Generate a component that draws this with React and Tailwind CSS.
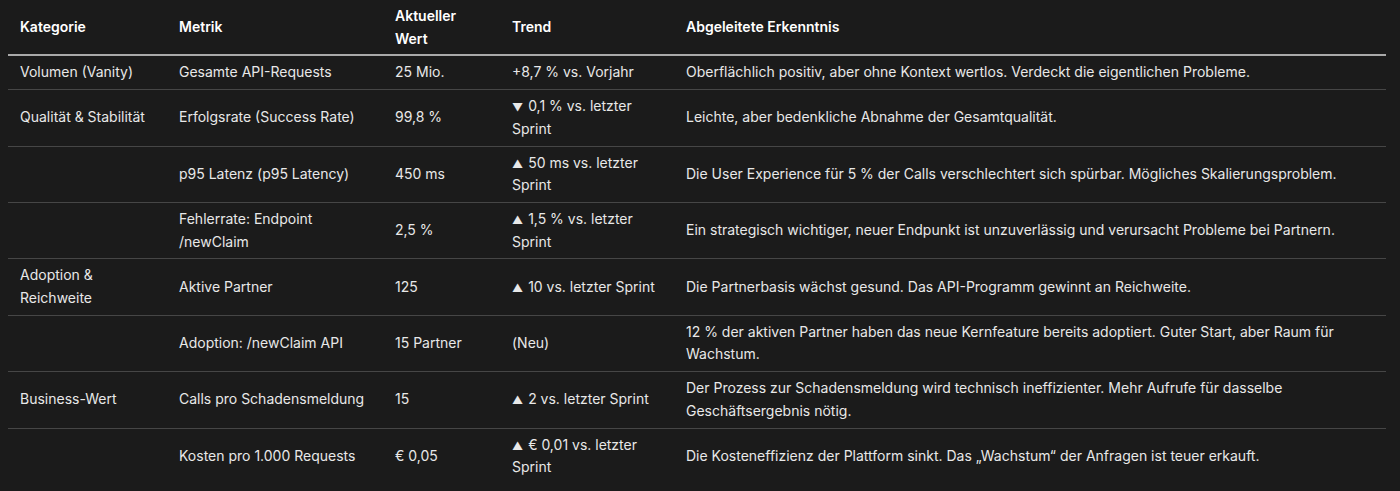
import React from 'react';

const rows = [
  { kategorie: 'Volumen (Vanity)', metrik: 'Gesamte API-Requests', wert: '25 Mio.', trend: '+8,7 % vs. Vorjahr', erkenntnis: 'Oberflächlich positiv, aber ohne Kontext wertlos. Verdeckt die eigentlichen Probleme.' },
  { kategorie: 'Qualität & Stabilität', metrik: 'Erfolgsrate (Success Rate)', wert: '99,8 %', arrow: '▼', trend: '0,1 % vs. letzter Sprint', erkenntnis: 'Leichte, aber bedenkliche Abnahme der Gesamtqualität.' },
  { kategorie: '', metrik: 'p95 Latenz (p95 Latency)', wert: '450 ms', arrow: '▲', trend: '50 ms vs. letzter Sprint', erkenntnis: 'Die User Experience für 5 % der Calls verschlechtert sich spürbar. Mögliches Skalierungsproblem.' },
  { kategorie: '', metrik: 'Fehlerrate: Endpoint /newClaim', wert: '2,5 %', arrow: '▲', trend: '1,5 % vs. letzter Sprint', erkenntnis: 'Ein strategisch wichtiger, neuer Endpunkt ist unzuverlässig und verursacht Probleme bei Partnern.' },
  { kategorie: 'Adoption & Reichweite', metrik: 'Aktive Partner', wert: '125', arrow: '▲', trend: '10 vs. letzter Sprint', erkenntnis: 'Die Partnerbasis wächst gesund. Das API-Programm gewinnt an Reichweite.' },
  { kategorie: '', metrik: 'Adoption: /newClaim API', wert: '15 Partner', trend: '(Neu)', erkenntnis: '12 % der aktiven Partner haben das neue Kernfeature bereits adoptiert. Guter Start, aber Raum für Wachstum.' },
  { kategorie: 'Business-Wert', metrik: 'Calls pro Schadensmeldung', wert: '15', arrow: '▲', trend: '2 vs. letzter Sprint', erkenntnis: 'Der Prozess zur Schadensmeldung wird technisch ineffizienter. Mehr Aufrufe für dasselbe Geschäftsergebnis nötig.' },
  { kategorie: '', metrik: 'Kosten pro 1.000 Requests', wert: '€ 0,05', arrow: '▲', trend: '€ 0,01 vs. letzter Sprint', erkenntnis: 'Die Kosteneffizienz der Plattform sinkt. Das „Wachstum“ der Anfragen ist teuer erkauft.' },
];

export default function App() {
  return (
    <div className="min-h-[491px] w-[1400px] bg-[#1b1b1b] pl-2 pr-[14px] font-['Inter','Liberation_Sans',sans-serif] text-[14px] leading-[22.7px] text-[#e8e8e8]">
      <table className="w-full table-fixed border-collapse text-left">
        <colgroup>
          <col className="w-[159px]" />
          <col className="w-[216px]" />
          <col className="w-[117px]" />
          <col className="w-[174px]" />
          <col />
        </colgroup>
        <thead>
          <tr className="border-b-2 border-[#a9a9a9] text-white">
            <th className="px-3 pt-[5px] pb-[4px] font-semibold">Kategorie</th>
            <th className="px-3 pt-[5px] pb-[4px] font-semibold">Metrik</th>
            <th className="px-3 pt-[5px] pb-[4px] font-semibold">Aktueller Wert</th>
            <th className="px-3 pt-[5px] pb-[4px] font-semibold">Trend</th>
            <th className="px-3 pt-[5px] pb-[4px] font-semibold">Abgeleitete Erkenntnis</th>
          </tr>
        </thead>
        <tbody>
          {rows.map((r, i) => (
            <tr key={i} className={i < rows.length - 1 ? 'border-b border-[#464646]' : ''}>
              <td className="px-3 py-[5px] align-middle">{r.kategorie}</td>
              <td className="px-3 py-[5px] align-middle">{r.metrik}</td>
              <td className="px-3 py-[5px] align-middle">{r.wert}</td>
              <td className="px-3 py-[5px] align-middle">
                {r.arrow && <span className="mr-[5px] text-[11px] leading-none">{r.arrow}</span>}
                {r.trend}
              </td>
              <td className="px-3 py-[5px] align-middle">{r.erkenntnis}</td>
            </tr>
          ))}
        </tbody>
      </table>
    </div>
  );
}
